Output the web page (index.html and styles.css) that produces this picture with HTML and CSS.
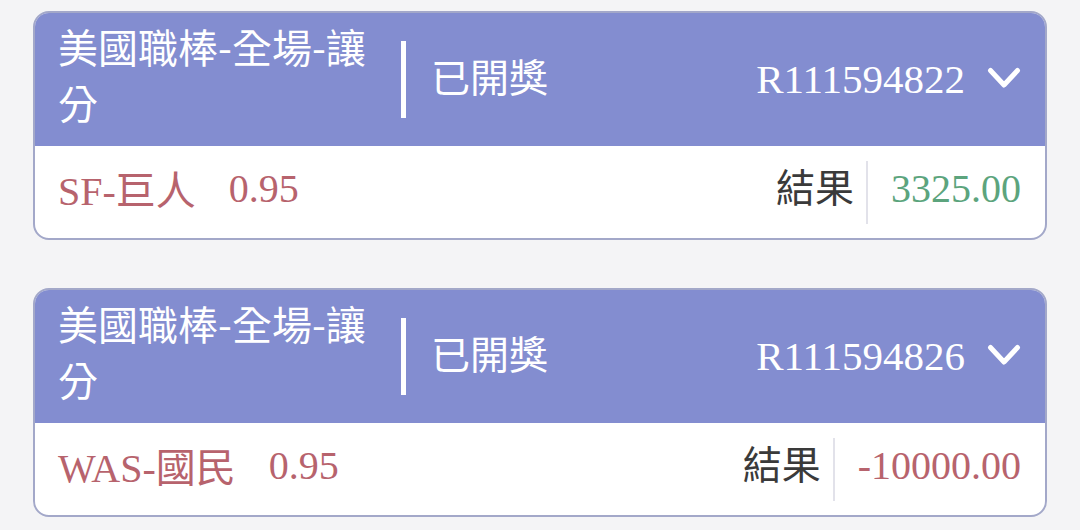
FILE: index.html
```html
<!DOCTYPE html>
<html lang="zh-Hant">
<head>
<meta charset="utf-8">
<link rel="stylesheet" href="styles.css">
</head>
<body>
<div class="list">
  <div class="card">
    <div class="card-head">
      <div class="title">美國職棒-全場-讓分</div>
      <div class="bar"></div>
      <div class="status">已開獎</div>
      <div class="order">R111594822</div>
      <svg class="chev" width="34" height="22" viewBox="0 0 34 22"><polyline points="3.5,3.5 17,18 30.5,3.5" fill="none" stroke="#fff" stroke-width="5" stroke-linecap="round" stroke-linejoin="round"/></svg>
    </div>
    <div class="card-body">
      <div class="pick"><span>SF-巨人</span><span class="odds">0.95</span></div>
      <div class="result">
        <span class="label">結果</span>
        <span class="divider"></span>
        <span class="amount win">3325.00</span>
      </div>
    </div>
  </div>
  <div class="card">
    <div class="card-head">
      <div class="title">美國職棒-全場-讓分</div>
      <div class="bar"></div>
      <div class="status">已開獎</div>
      <div class="order">R111594826</div>
      <svg class="chev" width="34" height="22" viewBox="0 0 34 22"><polyline points="3.5,3.5 17,18 30.5,3.5" fill="none" stroke="#fff" stroke-width="5" stroke-linecap="round" stroke-linejoin="round"/></svg>
    </div>
    <div class="card-body">
      <div class="pick"><span>WAS-國民</span><span class="odds">0.95</span></div>
      <div class="result">
        <span class="label">結果</span>
        <span class="divider"></span>
        <span class="amount loss">-10000.00</span>
      </div>
    </div>
  </div>
</div>
</body>
</html>
```
FILE: styles.css
```css
html, body {
  margin: 0;
  padding: 0;
  background: #f4f4f6;
}
.list {
  display: flex;
  flex-direction: column;
  gap: 48px;
  padding: 11px 33px 0 33px;
  width: 1014px;
}
.card {
  border: 2px solid #a3a8c9;
  border-radius: 16px;
  overflow: hidden;
  background: #fff;
}
.card-head {
  height: 133px;
  background: #838dd0;
  display: flex;
  align-items: center;
  padding: 0 24px 0 23px;
  color: #fff;
}
.title {
  flex: 0 0 330px;
  font-family: "Noto Sans CJK TC", "Noto Sans", sans-serif;
  font-size: 40px;
  line-height: 56px;
  margin-bottom: 12px;
}
.bar {
  flex: 0 0 5px;
  height: 77px;
  background: #fff;
  margin-left: 13px;
}
.status {
  margin-left: 25px;
  margin-bottom: 10px;
  font-family: "Noto Sans CJK TC", "Noto Sans", sans-serif;
  font-size: 39px;
  flex: 1;
}
.order {
  font-family: "Liberation Serif", "Times New Roman", serif;
  font-size: 41px;
  margin-right: 22px;
  margin-bottom: 2px;
}
.chev {
  display: block;
  margin-bottom: 3px;
}
.card-body {
  height: 92px;
  box-sizing: border-box;
  padding: 0 24px 8px 23px;
  display: flex;
  align-items: center;
  justify-content: space-between;
  font-family: "Liberation Serif", "Noto Sans CJK TC", serif;
  font-size: 40px;
}
.pick {
  color: #b7636d;
  display: flex;
  align-items: center;
}
.odds {
  margin-left: 33px;
}
.result {
  display: flex;
  align-items: center;
}
.label {
  color: #3a3a3a;
  font-family: "Noto Sans CJK TC", sans-serif;
  font-size: 39px;
  margin-bottom: 6px;
}
.divider {
  width: 2px;
  height: 63px;
  background: #e2e2ea;
  margin: 8px 23px 0 12px;
}
.amount.win {
  color: #5ca47d;
}
.amount.loss {
  color: #b7636d;
}
```
